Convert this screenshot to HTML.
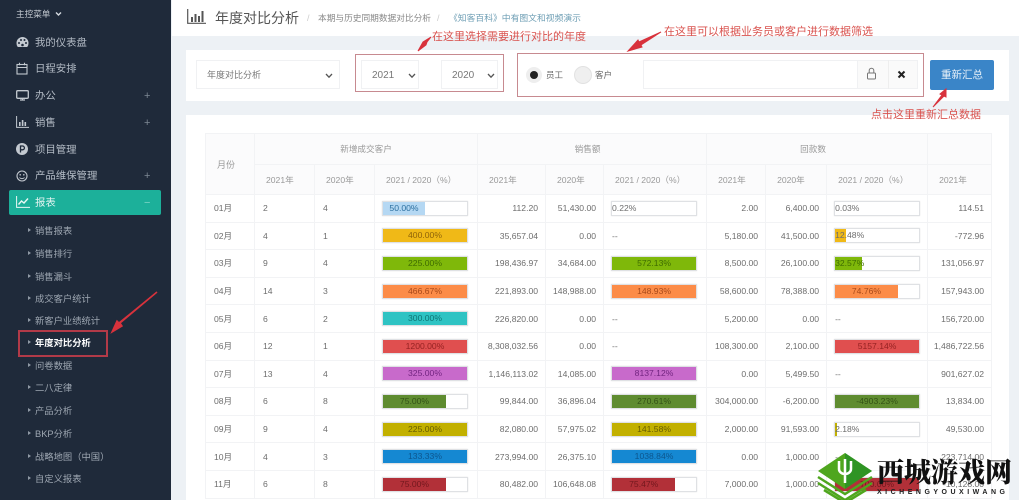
<!DOCTYPE html>
<html lang="zh"><head><meta charset="utf-8"><title>年度对比分析</title>
<style>
*{box-sizing:border-box}
html,body{margin:0;padding:0}
body{width:1019px;height:500px;overflow:hidden;position:relative;background:#edf1f5;font-family:"Liberation Sans","Noto Sans CJK SC",sans-serif;color:#666;filter:blur(.3px)}
.a{position:absolute;white-space:nowrap}
#side{position:absolute;left:0;top:0;width:171px;height:500px;background:#1f2a3a}
.m{position:absolute;left:35px;margin-top:2px;font-size:10.4px;line-height:14px;color:#b4bcc6;white-space:nowrap}
.s{position:absolute;left:35px;margin-top:1px;font-size:9.3px;line-height:14px;color:#9ea7b2;white-space:nowrap}
.s:before{content:"";position:absolute;left:-7px;top:4px;border-left:3px solid #8f99a5;border-top:2.5px solid transparent;border-bottom:2.5px solid transparent}
.p{position:absolute;left:144px;margin-top:1px;font-size:11px;line-height:14px;color:#7d8894}
.i{position:absolute;left:16px}
#head{position:absolute;left:172px;top:0;width:847px;height:36px;background:#fff}
.panel{position:absolute;left:186px;width:823px;background:#fff}
.sel{position:absolute;top:60px;height:29px;background:#fff;border:1px solid #f0f1f3;font-size:9px;line-height:29px;color:#777}
.chev{position:absolute;top:12px}
.red{position:absolute;border:1px solid #c78a90}
.note{position:absolute;margin-top:1px;font-size:11px;line-height:14px;color:#d9534f;white-space:nowrap}
table{position:absolute;left:205px;top:133px;width:786px;border-collapse:collapse;table-layout:fixed;font-size:8.6px;color:#6d6d6d}
td,th{border:1px solid #f2f3f5;padding:0;font-weight:normal;overflow:hidden;white-space:nowrap}
thead th{background:#fbfbfc;color:#999;font-size:8.6px}
thead tr.h1{height:31px}
thead tr.h2{height:30px}
thead tr.h2 th{text-align:left;padding-left:11px}
tbody tr{height:27.6px}
td.l{padding-left:8px}
td.n{text-align:right;padding-right:7px}
td.b{padding-left:7px}
.bar{width:86px;height:15px;background:#fff;border:1px solid #dfe1e4;box-shadow:0 0 1px #ddd;line-height:13px;color:#6d6d6d;overflow:visible}
.f{height:13px;text-align:center;white-space:nowrap;font-size:8.6px}
.c1{background:#b5d8f3;color:#2c6f9f}.c2{background:#f0b917;color:#8f640a}.c3{background:#7fb80a;color:#3f6c00}.c4{background:#fc8c48;color:#a84919}.c5{background:#2ec3c3;color:#0f7474}.c6{background:#e04f4f;color:#952222}.c7{background:#c86acb;color:#722480}.c8{background:#5f8c30;color:#335216}.c9{background:#c2b000;color:#665c00}.c10{background:#1588d2;color:#0d568e}.c11{background:#b23038;color:#72181e}
</style></head><body>

<div id="side">
<div class="a" style="left:16px;top:8px;font-size:8.6px;line-height:12px;color:#c6ccd3">主控菜单</div>
<svg class="a" style="left:55px;top:11px" width="7" height="6" viewBox="0 0 7 6"><path d="M1 1.5 3.5 4 6 1.5" fill="none" stroke="#d5dae0" stroke-width="1.4"/></svg>

<svg class="i" style="top:36px" width="13" height="12" viewBox="0 0 13 12"><path d="M6.5 1a6 6 0 0 0-6 6c0 2 .6 3.4 1.4 4h9.2c.8-.6 1.4-2 1.4-4a6 6 0 0 0-6-6z" fill="#c3c9d0"/><circle cx="3" cy="7" r="1" fill="#1f2a3a"/><circle cx="5" cy="4" r="1" fill="#1f2a3a"/><circle cx="8.500" cy="4" r="1" fill="#1f2a3a"/><circle cx="10" cy="7" r="1" fill="#1f2a3a"/><circle cx="6.500" cy="9" r="1.300" fill="#1f2a3a"/></svg>
<div class="m" style="top:35px">我的仪表盘</div>

<svg class="i" style="top:62px" width="12" height="13" viewBox="0 0 12 13"><rect x="1" y="2.500" width="10" height="9.500" fill="none" stroke="#c3c9d0" stroke-width="1.100"/><path d="M1 5.500h10M3.500 .8v2.500M8.500 .8v2.500" stroke="#c3c9d0" stroke-width="1.100"/></svg>
<div class="m" style="top:61px">日程安排</div>

<svg class="i" style="top:90px" width="13" height="11" viewBox="0 0 13 11"><rect x=".7" y=".7" width="11.600" height="7.600" rx="1" fill="none" stroke="#c3c9d0" stroke-width="1.300"/><path d="M4 10h5M6.500 8.300V10" stroke="#c3c9d0" stroke-width="1.200"/></svg>
<div class="m" style="top:88px">办公</div><div class="p" style="top:88px">+</div>

<svg class="i" style="top:116px" width="13" height="12" viewBox="0 0 13 12"><path d="M.6 0v11.400H13" fill="none" stroke="#c3c9d0" stroke-width="1"/><path d="M3 6h1.600v4H3zM5.800 4h1.600v6H5.800zM8.500 6h1.600v4H8.500z" fill="#c3c9d0"/></svg>
<div class="m" style="top:115px">销售</div><div class="p" style="top:115px">+</div>

<svg class="i" style="top:143px" width="12" height="12" viewBox="0 0 12 12"><circle cx="6" cy="6" r="6" fill="#c3c9d0"/><path d="M4.500 9.500V3h2a1.900 1.900 0 0 1 0 3.800h-2" fill="none" stroke="#1f2a3a" stroke-width="1.300"/></svg>
<div class="m" style="top:142px">项目管理</div>

<svg class="i" style="top:170px" width="12" height="12" viewBox="0 0 12 12"><circle cx="6" cy="6" r="5" fill="none" stroke="#c3c9d0" stroke-width="1.100"/><circle cx="4.200" cy="4.800" r=".8" fill="#c3c9d0"/><circle cx="7.800" cy="4.800" r=".8" fill="#c3c9d0"/><path d="M3.500 7.500c1.200 1.500 3.800 1.500 5 0" fill="none" stroke="#c3c9d0"/></svg>
<div class="m" style="top:168px">产品维保管理</div><div class="p" style="top:168px">+</div>

<div class="a" style="left:9px;top:190px;width:152px;height:25px;background:#1cb09a;border-radius:2px"></div>
<svg class="i" style="top:196px" width="14" height="12" viewBox="0 0 14 12"><path d="M.6 0v11.400H14" fill="none" stroke="#eaf7f5"/><path d="M2.500 8.500 5.500 5l2.500 2 4-4.500" fill="none" stroke="#eaf7f5" stroke-width="1.400"/></svg>
<div class="m" style="top:195px;color:#e4f4f1">报表</div><div class="p" style="top:195px;color:#7fd3c6">−</div>

<div class="s" style="top:223px">销售报表</div>
<div class="s" style="top:246px">销售排行</div>
<div class="s" style="top:269px">销售漏斗</div>
<div class="s" style="top:291px">成交客户统计</div>
<div class="s" style="top:313px">新客户业绩统计</div>
<div class="s" style="top:335px;color:#fff;font-weight:bold">年度对比分析</div>
<div class="s" style="top:358px">问卷数据</div>
<div class="s" style="top:380px">二八定律</div>
<div class="s" style="top:403px">产品分析</div>
<div class="s" style="top:426px">BKP分析</div>
<div class="s" style="top:449px">战略地图（中国）</div>
<div class="s" style="top:471px">自定义报表</div>
<div class="red" style="left:18px;top:330px;width:90px;height:27px;border:2px solid #b23a48"></div>
</div>

<div id="head"></div>
<svg class="a" style="left:187px;top:9px" width="19" height="15" viewBox="0 0 19 15"><path d="M.7 0v14.300H19" fill="none" stroke="#555" stroke-width="1.200"/><path d="M4 8h2v5H4zM7.500 5h2v8h-2zM11 7h2v6h-2zM14.500 2h2v11h-2z" fill="#555"/></svg>
<div class="a" style="left:215px;top:9px;font-size:14px;line-height:18px;color:#555">年度对比分析</div>
<div class="a" style="left:307px;top:12px;font-size:9px;line-height:13px;color:#ccc">/</div>
<div class="a" style="left:318px;top:12px;font-size:8.700px;line-height:13px;color:#888">本期与历史同期数据对比分析</div>
<div class="a" style="left:437px;top:12px;font-size:9px;line-height:13px;color:#ccc">/</div>
<div class="a" style="left:449px;top:12px;font-size:8.800px;line-height:13px;color:#6f9fb5">《知客百科》中有图文和视频演示</div>

<div class="panel" style="top:50px;height:51px"></div>
<div class="panel" style="top:115px;height:385px"></div>

<div class="sel" style="left:196px;width:144px;padding-left:10px">年度对比分析<svg class="chev" style="left:128px" width="8" height="6" viewBox="0 0 8 6"><path d="M1 1 4 4.200 7 1" fill="none" stroke="#555" stroke-width="1.300"/></svg></div>
<div class="sel" style="left:361px;width:58px;padding-left:10px;font-size:10px">2021<svg class="chev" style="left:46px" width="8" height="6" viewBox="0 0 8 6"><path d="M1 1 4 4.200 7 1" fill="none" stroke="#555" stroke-width="1.300"/></svg></div>
<div class="sel" style="left:441px;width:57px;padding-left:10px;font-size:10px">2020<svg class="chev" style="left:45px" width="8" height="6" viewBox="0 0 8 6"><path d="M1 1 4 4.200 7 1" fill="none" stroke="#555" stroke-width="1.300"/></svg></div>
<div class="red" style="left:355px;top:54px;width:149px;height:38px"></div>
<div class="red" style="left:517px;top:53px;width:407px;height:44px"></div>

<div class="a" style="left:526px;top:67px;width:16px;height:16px;border-radius:50%;background:#eeeeee"></div>
<div class="a" style="left:530px;top:71px;width:8px;height:8px;border-radius:50%;background:#222"></div>
<div class="a" style="left:546px;top:69px;font-size:8.500px;line-height:12px;color:#666">员工</div>
<div class="a" style="left:574px;top:66px;width:18px;height:18px;border-radius:50%;background:#efefef;border:1px solid #e2e2e2"></div>
<div class="a" style="left:595px;top:69px;font-size:8.500px;line-height:12px;color:#666">客户</div>

<div class="a" style="left:643px;top:60px;width:275px;height:29px;background:#fff;border:1px solid #f0f1f3"></div>
<div class="a" style="left:857px;top:60px;width:61px;height:29px;background:#fafafa;border:1px solid #f0f1f3"></div>
<div class="a" style="left:888px;top:60px;width:1px;height:29px;background:#eeeeee"></div>
<svg class="a" style="left:866px;top:67px" width="11" height="13" viewBox="0 0 11 13"><rect x="1.500" y="6" width="8" height="6" rx="1" fill="none" stroke="#777"/><path d="M3.200 6V3.500a2.300 2.300 0 0 1 4.600 0V6" fill="none" stroke="#777"/></svg>
<svg class="a" style="left:897px;top:70px" width="9" height="9" viewBox="0 0 9 9"><path d="M1.500 1.500l6 6M7.500 1.500l-6 6" stroke="#222" stroke-width="2"/></svg>

<div class="a" style="left:930px;top:60px;width:64px;height:30px;background:#3a85c8;border-radius:2px;color:#e8f1f9;font-size:10.500px;line-height:30px;text-align:center">重新汇总</div>

<div class="note" style="left:432px;top:29px">在这里选择需要进行对比的年度</div>
<div class="note" style="left:664px;top:24px">在这里可以根据业务员或客户进行数据筛选</div>
<div class="note" style="left:871px;top:107px">点击这里重新汇总数据</div>

<table>
<colgroup><col style="width:49px"><col style="width:60px"><col style="width:60px"><col style="width:103px"><col style="width:68px"><col style="width:58px"><col style="width:103px"><col style="width:59px"><col style="width:61px"><col style="width:101px"><col style="width:64px"></colgroup>
<thead>
<tr class="h1"><th rowspan="2" style="font-size:9px;text-align:left;padding-left:11px">月份</th><th colspan="3">新增成交客户</th><th colspan="3" style="padding-right:9px">销售额</th><th colspan="3" style="padding-right:8px">回款数</th><th></th></tr>
<tr class="h2"><th>2021年</th><th>2020年</th><th>2021 / 2020（%）</th><th>2021年</th><th>2020年</th><th>2021 / 2020（%）</th><th>2021年</th><th>2020年</th><th>2021 / 2020（%）</th><th>2021年</th></tr>
</thead>
<tbody>
<tr><td class="l">01月</td><td class="l">2</td><td class="l">4</td><td class="b"><div class="bar"><div class="f c1" style="width:50%">50.00%</div></div></td><td class="n">112.20</td><td class="n">51,430.00</td><td class="b"><div class="bar"><div class="f" style="width:.22%">0.22%</div></div></td><td class="n">2.00</td><td class="n">6,400.00</td><td class="b"><div class="bar"><div class="f" style="width:.03%">0.03%</div></div></td><td class="n">114.51</td></tr>
<tr><td class="l">02月</td><td class="l">4</td><td class="l">1</td><td class="b"><div class="bar"><div class="f c2">400.00%</div></div></td><td class="n">35,657.04</td><td class="n">0.00</td><td class="l">--</td><td class="n">5,180.00</td><td class="n">41,500.00</td><td class="b"><div class="bar"><div class="f c2" style="width:12.48%;color:#6d6d6d">12.48%</div></div></td><td class="n">-772.96</td></tr>
<tr><td class="l">03月</td><td class="l">9</td><td class="l">4</td><td class="b"><div class="bar"><div class="f c3">225.00%</div></div></td><td class="n">198,436.97</td><td class="n">34,684.00</td><td class="b"><div class="bar"><div class="f c3">572.13%</div></div></td><td class="n">8,500.00</td><td class="n">26,100.00</td><td class="b"><div class="bar"><div class="f c3" style="width:32.57%">32.57%</div></div></td><td class="n">131,056.97</td></tr>
<tr><td class="l">04月</td><td class="l">14</td><td class="l">3</td><td class="b"><div class="bar"><div class="f c4">466.67%</div></div></td><td class="n">221,893.00</td><td class="n">148,988.00</td><td class="b"><div class="bar"><div class="f c4">148.93%</div></div></td><td class="n">58,600.00</td><td class="n">78,388.00</td><td class="b"><div class="bar"><div class="f c4" style="width:74.76%">74.76%</div></div></td><td class="n">157,943.00</td></tr>
<tr><td class="l">05月</td><td class="l">6</td><td class="l">2</td><td class="b"><div class="bar"><div class="f c5">300.00%</div></div></td><td class="n">226,820.00</td><td class="n">0.00</td><td class="l">--</td><td class="n">5,200.00</td><td class="n">0.00</td><td class="l">--</td><td class="n">156,720.00</td></tr>
<tr><td class="l">06月</td><td class="l">12</td><td class="l">1</td><td class="b"><div class="bar"><div class="f c6">1200.00%</div></div></td><td class="n">8,308,032.56</td><td class="n">0.00</td><td class="l">--</td><td class="n">108,300.00</td><td class="n">2,100.00</td><td class="b"><div class="bar"><div class="f c6">5157.14%</div></div></td><td class="n">1,486,722.56</td></tr>
<tr><td class="l">07月</td><td class="l">13</td><td class="l">4</td><td class="b"><div class="bar"><div class="f c7">325.00%</div></div></td><td class="n">1,146,113.02</td><td class="n">14,085.00</td><td class="b"><div class="bar"><div class="f c7">8137.12%</div></div></td><td class="n">0.00</td><td class="n">5,499.50</td><td class="l">--</td><td class="n">901,627.02</td></tr>
<tr><td class="l">08月</td><td class="l">6</td><td class="l">8</td><td class="b"><div class="bar"><div class="f c8" style="width:75%">75.00%</div></div></td><td class="n">99,844.00</td><td class="n">36,896.04</td><td class="b"><div class="bar"><div class="f c8">270.61%</div></div></td><td class="n">304,000.00</td><td class="n">-6,200.00</td><td class="b"><div class="bar"><div class="f c8">-4903.23%</div></div></td><td class="n">13,834.00</td></tr>
<tr><td class="l">09月</td><td class="l">9</td><td class="l">4</td><td class="b"><div class="bar"><div class="f c9">225.00%</div></div></td><td class="n">82,080.00</td><td class="n">57,975.02</td><td class="b"><div class="bar"><div class="f c9">141.58%</div></div></td><td class="n">2,000.00</td><td class="n">91,593.00</td><td class="b"><div class="bar"><div class="f c9" style="width:2.18%;color:#6d6d6d">2.18%</div></div></td><td class="n">49,530.00</td></tr>
<tr><td class="l">10月</td><td class="l">4</td><td class="l">3</td><td class="b"><div class="bar"><div class="f c10">133.33%</div></div></td><td class="n">273,994.00</td><td class="n">26,375.10</td><td class="b"><div class="bar"><div class="f c10">1038.84%</div></div></td><td class="n">0.00</td><td class="n">1,000.00</td><td class="l">--</td><td class="n">223,714.00</td></tr>
<tr><td class="l">11月</td><td class="l">6</td><td class="l">8</td><td class="b"><div class="bar"><div class="f c11" style="width:75%">75.00%</div></div></td><td class="n">80,482.00</td><td class="n">106,648.08</td><td class="b"><div class="bar"><div class="f c11" style="width:75.47%">75.47%</div></div></td><td class="n">7,000.00</td><td class="n">1,000.00</td><td class="b"><div class="bar"><div class="f c11">700.00%</div></div></td><td class="n">-10,128.00</td></tr>
</tbody>
</table>

<svg class="a" style="left:0;top:0;pointer-events:none" width="1019" height="500" viewBox="0 0 1019 500">
<path d="M157 292 120 323l2 3-10 6 5-11 2 2z" fill="#d8323c" stroke="#d8323c" stroke-width="1.500"/>
<path d="M431 37 423 42l-5 9 8-6 1-3z" fill="#d8323c" stroke="#d8323c"/>
<path d="M661 32 639 42l-1-2-10 11 14-4-1-2z" fill="#d8323c" stroke="#d8323c"/>
<path d="M933 107 942 95l-2-1 6-5 0 8-2-1z" fill="#d8323c" stroke="#d8323c"/>
<path d="M845 453 818 471l27 18 27-18z" fill="#4fa61e"/>
<path d="M845 453 872 471 845 489z" fill="#2f9424"/>
<path d="M845 459v24M839 461v8c0 3 3 5 6 5s6-2 6-5v-8" fill="none" stroke="#fff" stroke-width="2.500"/>
<path d="M818 477 845 494 872 477M818 483 845 500 872 483M824 490 845 503 866 490" fill="none" stroke="#4fa61e" stroke-width="2.500"/>
</svg>
<div class="a" style="left:877px;top:451px;font-family:'Noto Serif CJK SC','Liberation Serif',serif;font-weight:900;font-size:27px;line-height:39px;color:#111">西城游戏网</div>
<div class="a" style="left:877px;top:488px;font-size:7px;line-height:10px;font-weight:bold;letter-spacing:3.500px;color:#222">XICHENGYOUXIWANG</div>
</body></html>
